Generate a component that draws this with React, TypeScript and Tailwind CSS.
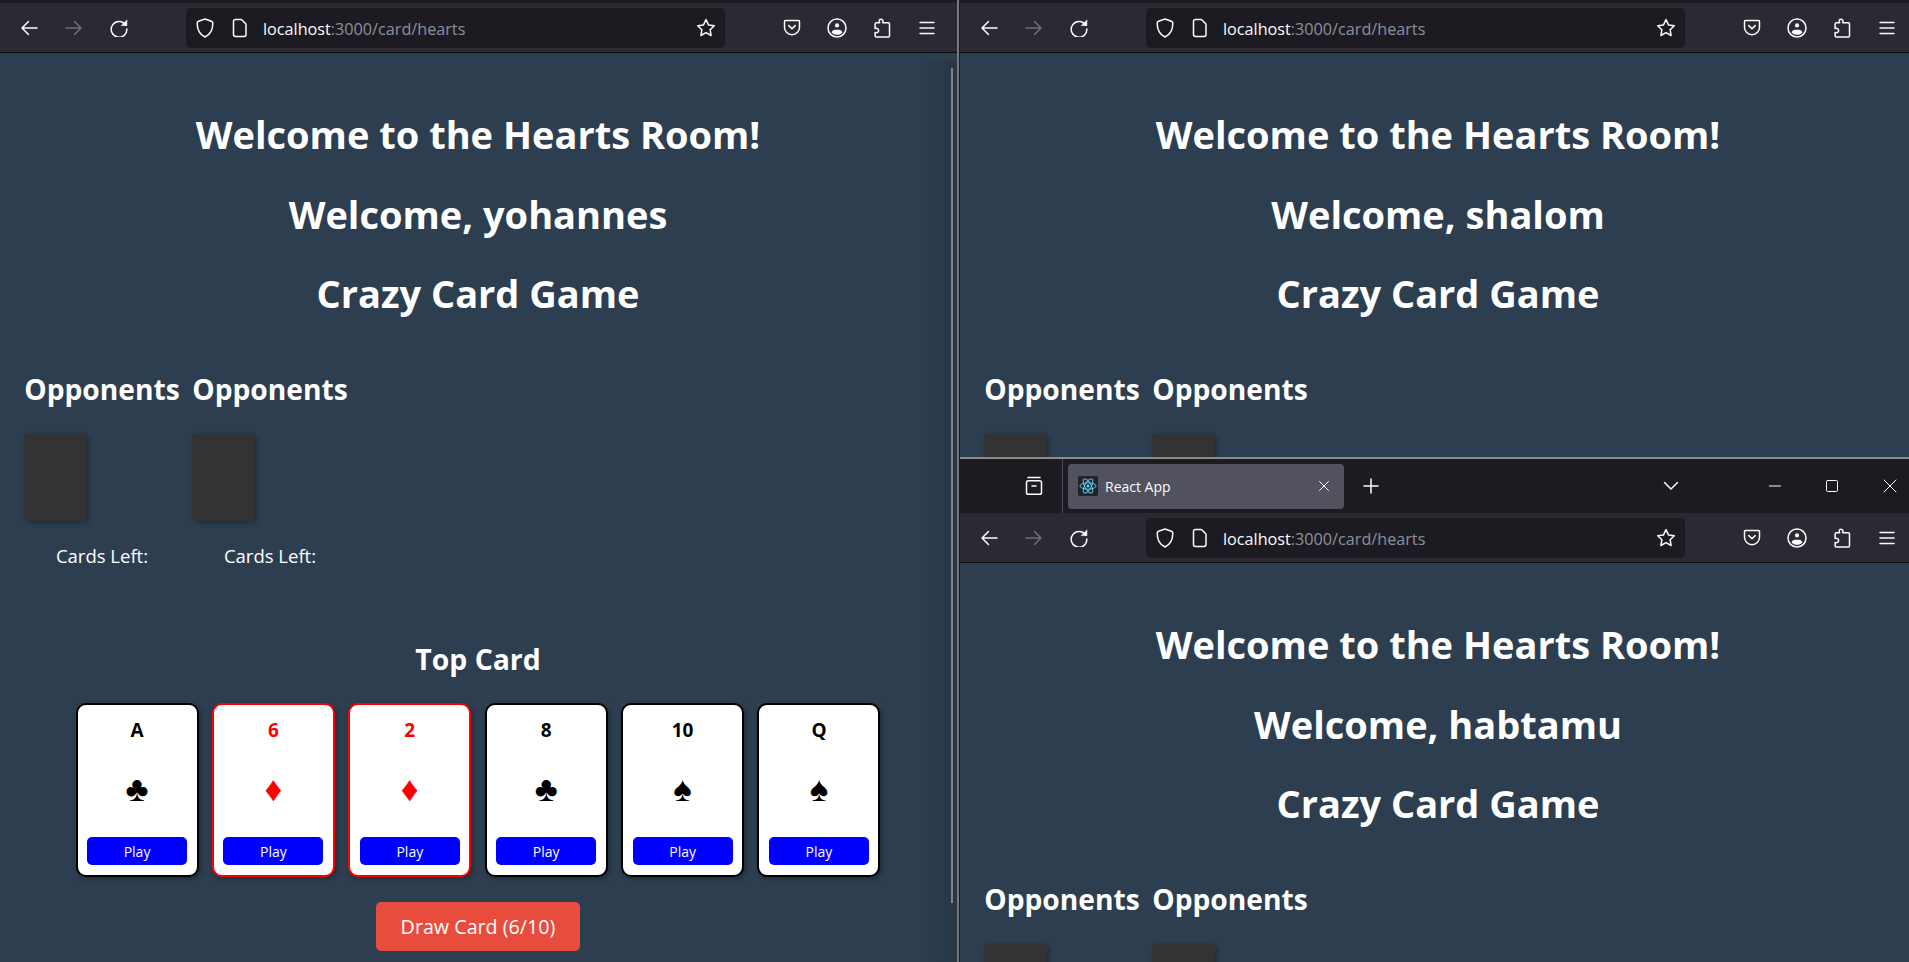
import React from "react"

const cards = [
    { rank: "A", suit: "♣", red: false },
    { rank: "6", suit: "♦", red: true },
    { rank: "2", suit: "♦", red: true },
    { rank: "8", suit: "♣", red: false },
    { rank: "10", suit: "♠", red: false },
    { rank: "Q", suit: "♠", red: false },
]

const ToolbarIcon = ({ children }: { children: React.ReactNode }) => (
    <div className="flex w-[45px] shrink-0 items-center justify-center">{children}</div>
)

const Svg = ({ w, h, children, className }: { w: number; h: number; children: React.ReactNode; className?: string }) => (
    <svg width={w} height={h} viewBox={`0 0 ${w} ${h}`} fill="none" stroke="currentColor" strokeWidth="1.5" strokeLinecap="round" strokeLinejoin="round" className={`shrink-0 ${className ?? ""}`}>
        {children}
    </svg>
)

const Toolbar = () => (
    <div className="flex h-[50px] items-center border-b border-[#0c0c0f] bg-[#2b2a33] pl-[6.5px] text-[#fbfbfe]">
        <ToolbarIcon>
            <Svg w={18} h={16}><path d="M17 8H2M8.5 1.5 2 8l6.5 6.5" /></Svg>
        </ToolbarIcon>
        <ToolbarIcon>
            <Svg w={18} h={16} className="text-[#6f6e75]"><path d="M1 8h15M9.5 1.5 16 8l-6.5 6.5" /></Svg>
        </ToolbarIcon>
        <ToolbarIcon>
            <Svg w={18} h={18}>
                <path d="M15.6 6.2A7.8 7.8 0 1 0 16.8 10" />
                <path d="M11.5 6.6h5.4V1.2z" fill="currentColor" strokeWidth="0.6" />
            </Svg>
        </ToolbarIcon>

        {/* Address bar */}
        <div className="ml-[44.5px] flex h-[40px] w-[539px] shrink-0 items-center rounded-[5px] bg-[#1c1b22] pl-[10px] pr-[9px]">
            <Svg w={18} h={20}><path d="M9 1 2.6 3.3C1.8 3.6 1.2 4.3 1.2 5.2 1.2 12.4 4 16.7 9 19c5-2.3 7.8-6.6 7.8-13.8 0-.9-.6-1.6-1.4-1.9z" /></Svg>
            <Svg w={16} h={20} className="ml-[18px]"><path d="M3.4 1.5h5.4c.5 0 .9.2 1.2.5l3.5 3.5c.3.3.5.7.5 1.2v9.9a1.9 1.9 0 0 1-1.9 1.9H3.4a1.9 1.9 0 0 1-1.9-1.9V3.4a1.9 1.9 0 0 1 1.9-1.9z" /></Svg>
            <span className="ml-[15px] pt-[2px] text-[16.2px] leading-[20px] text-[#fbfbfe]">
                localhost<span className="text-[#8f8f9d]">:3000/card/hearts</span>
            </span>
            <Svg w={20} h={20} className="ml-auto"><path d="m10 1.6 2.5 5.3 5.8.8-4.2 4 1 5.8-5.1-2.8-5.1 2.8 1-5.8-4.2-4 5.8-.8z" /></Svg>
        </div>

        <div className="ml-[44.5px] flex">
            <ToolbarIcon>
                <Svg w={18} h={18}>
                    <path d="M2.6 1.5h12.8c.6 0 1.1.5 1.1 1.1v5.6a7.5 7.5 0 0 1-15 0V2.6c0-.6.5-1.1 1.1-1.1z" />
                    <path d="m5.8 6.6 3.2 3.1 3.2-3.1" />
                </Svg>
            </ToolbarIcon>
            <ToolbarIcon>
                <Svg w={20} h={20}>
                    <circle cx="10" cy="10" r="9" />
                    <circle cx="10" cy="7.4" r="2.1" fill="currentColor" stroke="none" />
                    <path d="M4.6 14.4c.6-1.9 2-2.6 3.4-2.6h4c1.4 0 2.8.7 3.4 2.6-1.4 1.5-3.3 2.3-5.4 2.3s-4-.8-5.4-2.3z" fill="currentColor" stroke="none" />
                </Svg>
            </ToolbarIcon>
            <ToolbarIcon>
                <Svg w={18} h={20}>
                    <path d="M7 1.5c1.6-.7 3 .4 3 1.9 0 .5-.1.9-.3 1.3h5.6c.7 0 1.2.5 1.2 1.2v11.9c0 .7-.5 1.2-1.2 1.2H3.3c-.7 0-1.2-.5-1.2-1.2v-3.3c1.9.6 3.5-.4 3.5-2s-1.6-2.6-3.5-2V6c0-.7.5-1.3 1.2-1.3h3.4C6 3.5 6 2 7 1.5z" />
                </Svg>
            </ToolbarIcon>
            <ToolbarIcon>
                <Svg w={16} h={14}><path d="M1 1.5h14M1 7h14M1 12.5h14" /></Svg>
            </ToolbarIcon>
        </div>
    </div>
)

const Opponent = () => (
    <div className="w-[156px]">
        <h3 className="text-center text-[28.2px] font-bold leading-[38px]">Opponents</h3>
        <div className="mt-[25px] h-[88px] w-[63px] rounded-[5px] bg-[#333333] shadow-[2px_2px_5px_rgba(0,0,0,0.3)]" />
        <p className="mt-[22px] text-center text-[18.5px] leading-[26px]">Cards Left:</p>
    </div>
)

const PlayingCard = ({ rank, suit, red }: { rank: string; suit: string; red: boolean }) => (
    <div className={`flex h-[174px] w-[123px] flex-col items-center rounded-[10px] border-2 bg-white px-[9px] shadow-[2px_2px_5px_rgba(0,0,0,0.3)] ${red ? "border-[#ff0000] text-[#ff0000]" : "border-black text-black"}`}>
        <div className="mt-[12px] text-[19px] font-bold leading-[26px]">{rank}</div>
        <div className="mt-[30px] font-['Liberation_Sans',sans-serif] text-[35px] leading-[32px]">{suit}</div>
        <button className="mt-[32px] h-[28px] w-[100px] rounded-[5px] bg-[#0000ff] text-[14px] text-white">Play</button>
    </div>
)

const GameRoom = ({ name }: { name: string }) => (
    <div className="h-[909px] w-[956px] overflow-hidden bg-[#2c3e50] font-['Open_Sans',sans-serif] text-white">
        <div className="pt-[54px] text-center text-[38px] font-bold leading-[54px]">
            <h1>Welcome to the Hearts Room!</h1>
            <h2 className="mt-[26px]">Welcome, {name}</h2>
            <h2 className="mt-[25px]">Crazy Card Game</h2>
        </div>
        <div className="ml-[24px] mt-[50px] flex gap-[12px]">
            <Opponent />
            <Opponent />
        </div>
        <h3 className="mt-[71px] text-center text-[28.4px] font-bold leading-[38px]">Top Card</h3>
        <div className="mt-[25px] flex justify-center gap-[13.4px]">
            {cards.map((c, i) => (
                <PlayingCard key={i} rank={c.rank} suit={c.suit} red={c.red} />
            ))}
        </div>
        <div className="mt-[25px] flex justify-center">
            <button className="h-[49px] w-[204px] rounded-[5px] bg-[#e74c3c] text-[19.7px] text-white">Draw Card (6/10)</button>
        </div>
    </div>
)

const BrowserWindow = ({ name }: { name: string }) => (
    <div className="w-[958px] shrink-0 bg-[#2c3e50]">
        <Toolbar />
        <GameRoom name={name} />
    </div>
)

const TabStrip = () => (
    <div className="relative flex h-[54px] w-[949px] items-center bg-[#1c1b22] text-[#fbfbfe]">
        <div className="flex h-full w-[103px] items-center justify-end border-r border-[#4a4a52] pr-[18px]">
            <Svg w={20} h={20}>
                <path d="M4 1.5h12M2.5 6.5c0-1 .8-1.8 1.8-1.8h11.4c1 0 1.8.8 1.8 1.8v10c0 1-.8 1.8-1.8 1.8H4.3c-1 0-1.8-.8-1.8-1.8z" />
                <path d="M8 10h4" />
            </Svg>
        </div>
        <div className="ml-[5px] flex h-[45px] w-[276px] items-center rounded-[4px] bg-[#52525e] pl-[10px] pr-[14px]">
            <div className="flex h-[20px] w-[20px] items-center justify-center rounded-[2px] bg-[#20232a]">
                <svg width="18" height="18" viewBox="0 0 18 18" fill="none" stroke="#61dafb" strokeWidth="0.9">
                    <ellipse cx="9" cy="9" rx="8" ry="3.2" />
                    <ellipse cx="9" cy="9" rx="8" ry="3.2" transform="rotate(60 9 9)" />
                    <ellipse cx="9" cy="9" rx="8" ry="3.2" transform="rotate(120 9 9)" />
                    <circle cx="9" cy="9" r="1.5" fill="#61dafb" stroke="none" />
                </svg>
            </div>
            <span className="ml-[7px] text-[14px]">React App</span>
            <Svg w={12} h={12} className="ml-auto"><path d="m1.5 1.5 9 9M10.5 1.5l-9 9" strokeWidth="1" /></Svg>
        </div>
        <Svg w={16} h={16} className="ml-[19px]"><path d="M8 1v14M1 8h14" /></Svg>
        <Svg w={16} h={10} className="ml-[284px]"><path d="m1.5 1.5 6.5 6.5 6.5-6.5" /></Svg>
        <Svg w={12} h={2} className="ml-[90px]"><path d="M.5 1h11" strokeWidth="1" /></Svg>
        <Svg w={12} h={12} className="ml-[45px]"><rect x=".5" y=".5" width="11" height="11" rx="1" strokeWidth="1" /></Svg>
        <Svg w={14} h={14} className="ml-[45px]"><path d="m1 1 12 12M13 1 1 13" strokeWidth="1" /></Svg>
    </div>
)

const App = () => {
    return (
        <div className="flex h-[962px] w-[1909px] overflow-hidden bg-[#2c3e50] font-['Open_Sans',sans-serif]">
            {/* Left window */}
            <div className="relative h-full w-[957px] shrink-0 overflow-hidden">
                <div className="h-[3px] bg-[#1c1b22]" />
                <BrowserWindow name="yohannes" />
                <div className="absolute right-[4px] top-[68px] h-[835px] w-[2px] bg-[#8d9298]" />
                <div className="absolute bottom-0 right-0 top-[60px] w-[40px] bg-gradient-to-r from-transparent to-[rgba(0,0,0,0.12)]" />
            </div>
            <div className="w-[2px] shrink-0 bg-[#77777c]" />

            {/* Right windows */}
            <div className="flex h-full w-[950px] shrink-0 flex-col overflow-hidden border-l border-[#1c1b22]">
                <div className="h-[457px] shrink-0 overflow-hidden">
                    <div className="h-[3px] bg-[#1c1b22]" />
                    <BrowserWindow name="shalom" />
                </div>
                <div className="h-[2px] shrink-0 bg-[#8a8a8f]" />
                <div className="min-h-0 flex-1 overflow-hidden">
                    <TabStrip />
                    <BrowserWindow name="habtamu" />
                </div>
            </div>
        </div>
    )
}

export default App
